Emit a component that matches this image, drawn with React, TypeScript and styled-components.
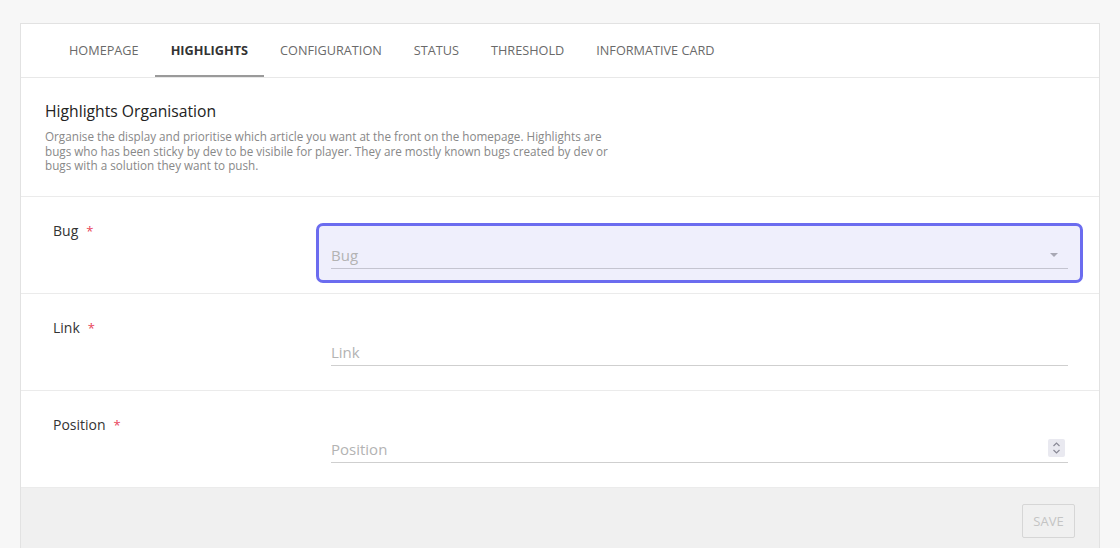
import React from "react";
import styled, { createGlobalStyle } from "styled-components";

const Global = createGlobalStyle`
  html, body { margin: 0; padding: 0; background: #f7f7f7; }
  body { font-family: "Open Sans", "Noto Sans", sans-serif; color: #333; }
  * { box-sizing: border-box; }
`;

const Page = styled.div`
  padding: 23px 20px 0 20px;
  height: 548px;
  overflow: hidden;
`;

const Card = styled.div`
  background: #fff;
  border: 1px solid #e2e2e2;
  border-bottom: none;
  display: flex;
  flex-direction: column;
`;

const Tabs = styled.nav`
  display: flex;
  padding: 0 32px;
  border-bottom: 1px solid #e8e8e8;
  height: 54px;
`;

const Tab = styled.div<{ $active?: boolean }>`
  padding: 0 16px;
  height: 53px;
  line-height: 52px;
  font-size: 12.7px;
  text-transform: uppercase;
  color: ${(p) => (p.$active ? "#333" : "#6a6a6a")};
  font-weight: ${(p) => (p.$active ? 700 : 400)};
  box-shadow: ${(p) => (p.$active ? "inset 0 -2px 0 #9a9a9a" : "none")};
`;

const Intro = styled.section`
  padding: 22px 24px 23px 24px;
  border-bottom: 1px solid #ebebeb;
`;

const Title = styled.h2`
  margin: 0 0 7px 0;
  font-size: 15.7px;
  font-weight: 400;
  line-height: 22px;
  color: #222;
`;

const Description = styled.p`
  margin: 0;
  font-size: 11.7px;
  line-height: 14.5px;
  color: #888;
  max-width: 570px;
`;

const Row = styled.div`
  display: grid;
  grid-template-columns: 263px 1fr;
  padding: 24px 16px 0 32px;
  height: 97px;
  border-bottom: 1px solid #ebebeb;
  align-items: start;
`;

const Label = styled.label`
  font-size: 14px;
  line-height: 20px;
  color: #333;
`;

const Required = styled.span`
  color: #e8445a;
  margin-left: 8px;
  font-size: 13px;
`;

const FieldBox = styled.div<{ $focused?: boolean }>`
  margin-top: 2px;
  padding: 12px 12px 11px 12px;
  border: 3px solid ${(p) => (p.$focused ? "#6b6cef" : "transparent")};
  border-radius: 7px;
  background: ${(p) => (p.$focused ? "#efeffc" : "transparent")};
`;

const Field = styled.div<{ $focused?: boolean }>`
  position: relative;
  display: flex;
  align-items: center;
  height: 31px;
  border-bottom: 1px solid ${(p) => (p.$focused ? "#c4c4d0" : "#cfcfcf")};
`;

const Placeholder = styled.span`
  flex: 1;
  font-size: 15px;
  color: #b3b3b3;
  padding-top: 5px;
`;

const Caret = styled.span`
  width: 0;
  height: 0;
  border-left: 4px solid transparent;
  border-right: 4px solid transparent;
  border-top: 4px solid #a8a8b4;
  margin-right: 10px;
  margin-top: 4px;
`;

const Spinner = styled.span`
  width: 17px;
  height: 18px;
  background: #e9e9f0;
  border-radius: 2px;
  margin-right: 3px;
  margin-top: 2px;
  display: flex;
  align-items: center;
  justify-content: center;
`;

const Footer = styled.footer`
  background: #f0f0f0;
  padding: 16px 24px 20px 24px;
  display: flex;
  justify-content: flex-end;
`;

const SaveButton = styled.button`
  font-family: inherit;
  font-size: 13px;
  color: #c4c4c4;
  background: transparent;
  border: 1px solid #d6d6d6;
  border-radius: 2px;
  height: 34px;
  width: 53px;
  padding: 0;
  text-transform: uppercase;
`;

export default function App() {
  const tabs = ["Homepage", "Highlights", "Configuration", "Status", "Threshold", "Informative card"];
  return (
    <>
      <Global />
      <Page>
        <Card>
          <Tabs>
            {tabs.map((t) => (
              <Tab key={t} $active={t === "Highlights"}>
                {t}
              </Tab>
            ))}
          </Tabs>
          <Intro>
            <Title>Highlights Organisation</Title>
            <Description>
              Organise the display and prioritise which article you want at the front on the homepage. Highlights are
              bugs who has been sticky by dev to be visibile for player. They are mostly known bugs created by dev or
              bugs with a solution they want to push.
            </Description>
          </Intro>
          <Row>
            <Label>
              Bug<Required>*</Required>
            </Label>
            <FieldBox $focused>
              <Field $focused>
                <Placeholder>Bug</Placeholder>
                <Caret />
              </Field>
            </FieldBox>
          </Row>
          <Row>
            <Label>
              Link<Required>*</Required>
            </Label>
            <FieldBox>
              <Field>
                <Placeholder>Link</Placeholder>
              </Field>
            </FieldBox>
          </Row>
          <Row>
            <Label>
              Position<Required>*</Required>
            </Label>
            <FieldBox>
              <Field>
                <Placeholder>Position</Placeholder>
                <Spinner>
                  <svg width="9" height="14" viewBox="0 0 9 14" fill="none" stroke="#8a8a96" strokeWidth="1.2">
                    <path d="M1.5 5 L4.5 2 L7.5 5" />
                    <path d="M1.5 9 L4.5 12 L7.5 9" />
                  </svg>
                </Spinner>
              </Field>
            </FieldBox>
          </Row>
          <Footer>
            <SaveButton>Save</SaveButton>
          </Footer>
        </Card>
      </Page>
    </>
  );
}
